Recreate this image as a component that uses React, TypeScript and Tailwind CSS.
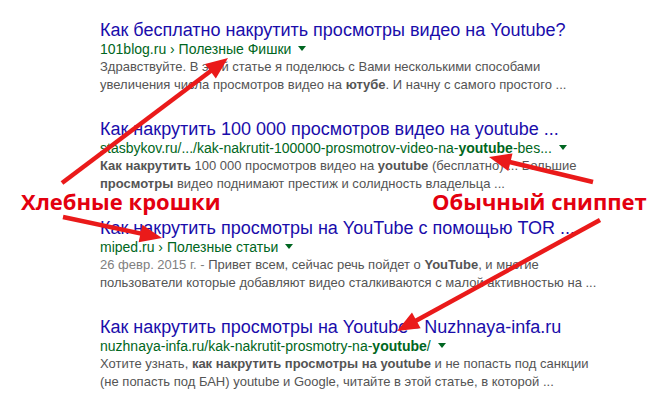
import React from 'react';

type ArrowProps = { x1: number; y1: number; x2: number; y2: number };

// red annotation arrow: straight shaft + filled triangle head
function Arrow({ x1, y1, x2, y2 }: ArrowProps) {
  const dx = x2 - x1;
  const dy = y2 - y1;
  const len = Math.hypot(dx, dy);
  const ux = dx / len;
  const uy = dy / len;
  const head = 22;
  const half = 9;
  const bx = x2 - ux * head;
  const by = y2 - uy * head;
  const pts = [
    `${x2},${y2}`,
    `${bx - uy * half},${by + ux * half}`,
    `${bx + uy * half},${by - ux * half}`,
  ].join(' ');
  return (
    <g>
      <line x1={x1} y1={y1} x2={bx + ux * 2} y2={by + uy * 2} stroke="#ea1a1a" strokeWidth={4.5} />
      <polygon points={pts} fill="#ea1a1a" />
    </g>
  );
}

function Caret() {
  return (
    <span className="inline-block ml-[7px] mb-[3px] w-0 h-0 border-l-[4px] border-r-[4px] border-t-[5px] border-l-transparent border-r-transparent border-t-[#006621] align-middle" />
  );
}

type ResultProps = {
  title: string;
  url: React.ReactNode;
  children: React.ReactNode;
};

function Result({ title, url, children }: ResultProps) {
  return (
    <div className="mb-[24px]">
      <h3 className="text-[18px] leading-[22px] text-[#1a0dab] whitespace-nowrap">{title}</h3>
      <div className="text-[14px] leading-[16px] text-[#006621] whitespace-nowrap">
        {url}
        <Caret />
      </div>
      <div className="mt-[1px] text-[13px] leading-[18px] text-[#545454] whitespace-nowrap">{children}</div>
    </div>
  );
}

export default function App() {
  return (
    <div className="relative w-[659px] h-[400px] overflow-hidden bg-white font-['Liberation_Sans',Arial,sans-serif]">
      <div className="pl-[100px] pt-[19px]">
        <Result title="Как бесплатно накрутить просмотры видео на Youtube?" url="101blog.ru › Полезные Фишки">
          Здравствуйте. В этой статье я поделюсь с Вами несколькими способами
          <br />
          увеличения числа просмотров видео на <b>ютубе</b>. И начну с самого простого ...
        </Result>
        <Result
          title="Как накрутить 100 000 просмотров видео на youtube ..."
          url={
            <>
              stasbykov.ru/.../kak-nakrutit-100000-prosmotrov-video-na-<b>youtube</b>-bes...
            </>
          }
        >
          <b>Как накрутить</b> 100 000 просмотров видео на <b>youtube</b> (бесплатно) ... Большие
          <br />
          <b>просмотры</b> видео поднимают престиж и солидность владельца ...
        </Result>
        <Result title="Как накрутить просмотры на YouTube с помощью TOR ..." url="miped.ru › Полезные статьи">
          <span className="text-[#808080]">26 февр. 2015 г. - </span>Привет всем, сейчас речь пойдет о <b>YouTube</b>, и многие
          <br />
          пользователи которые добавляют видео сталкиваются с малой активностью на ...
        </Result>
        <Result
          title="Как накрутить просмотры на Youtube - Nuzhnaya-infa.ru"
          url={
            <>
              nuzhnaya-infa.ru/kak-nakrutit-prosmotry-na-<b>youtube</b>/
            </>
          }
        >
          Хотите узнать, <b>как накрутить просмотры на youtube</b> и не попасть под санкции
          <br />
          (не попасть под БАН) youtube и Google, читайте в этой статье, в которой ...
        </Result>
      </div>

      {/* annotations */}
      <svg className="absolute inset-0 pointer-events-none" width={659} height={400}>
        <Arrow x1={62} y1={183} x2={228} y2={58} />
        <Arrow x1={63} y1={217} x2={162} y2={238} />
        <Arrow x1={593} y1={182} x2={489} y2={157} />
        <Arrow x1={600} y1={220} x2={397} y2={331} />
      </svg>
      <div className="absolute left-[21px] top-[186px] text-[22px] leading-[30px] font-bold text-[#e3000f] whitespace-nowrap font-['Open_Sans',sans-serif]">
        Хлебные крошки
      </div>
      <div className="absolute left-[432px] top-[186px] text-[22px] leading-[30px] font-bold text-[#e3000f] whitespace-nowrap font-['Open_Sans',sans-serif]">
        Обычный сниппет
      </div>
    </div>
  );
}
